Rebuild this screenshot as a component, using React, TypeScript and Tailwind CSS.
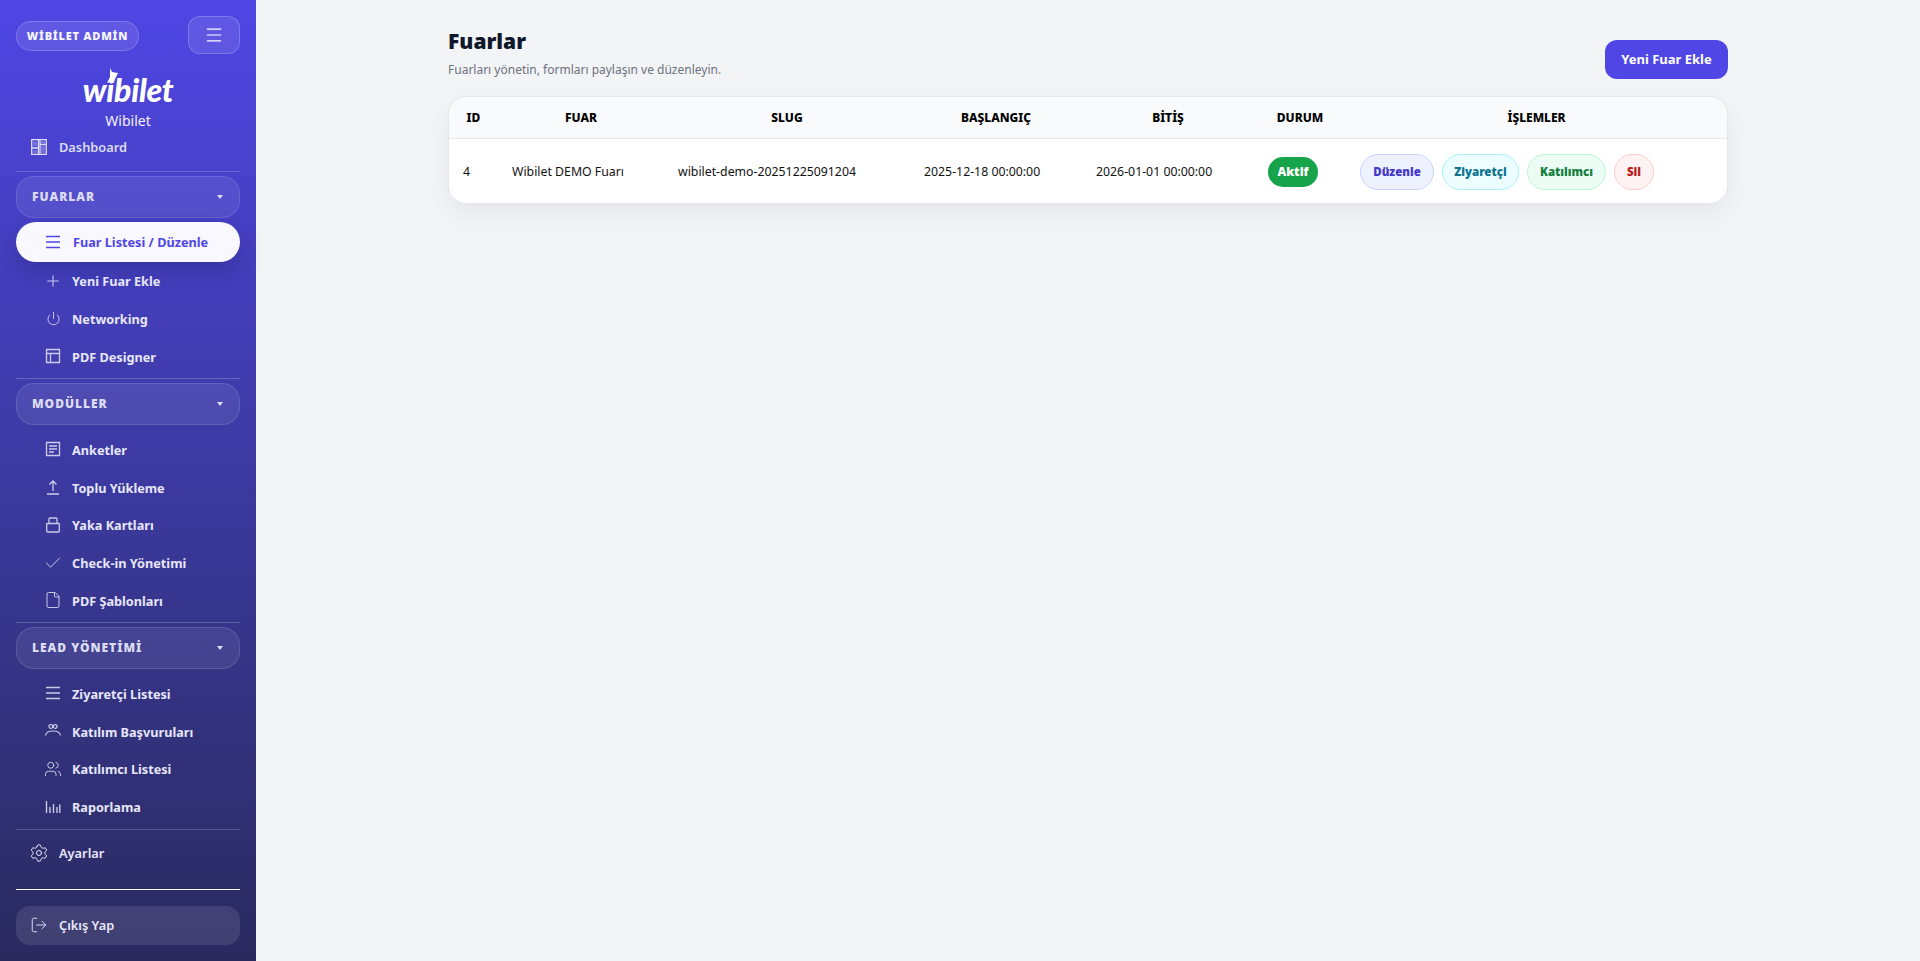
import { LogOut, Menu, Plus, Power, Settings, Check, File, Users } from "lucide-react";
import type { ReactNode } from "react";

const ic = "w-[18px] h-[18px] shrink-0";

function Svg({ children, className = ic }: { children: ReactNode; className?: string }) {
  return (
    <svg viewBox="0 0 18 18" fill="none" stroke="currentColor" strokeWidth="1.2" className={className}>
      {children}
    </svg>
  );
}

const LinesIcon = () => (
  <Svg><path d="M2 3.500h14M2 9h14M2 14.500h14" strokeWidth="1.400" /></Svg>
);
const TableIcon = () => (
  <Svg><path d="M2.500 2.500h13v13h-13zM2.500 6.500h13M6.500 6.500v9" strokeWidth="1.300" /></Svg>
);
const SurveyIcon = () => (
  <Svg><path d="M2.500 2.500h13v13h-13zM5 6h8M5 9h8M5 12h5" strokeWidth="1.300" /></Svg>
);
const UploadIcon = () => (
  <Svg><path d="M3 16h12M9 13V3M5.500 6.500 9 3l3.500 3.500" strokeWidth="1.300" /></Svg>
);
const BadgeIcon = () => (
  <Svg><path d="M3.500 7.500h11a.8.8 0 0 1 .8.8v6.900a.8.8 0 0 1-.8.8h-11a.8.8 0 0 1-.8-.8V8.300a.8.8 0 0 1 .8-.8ZM5 7.500V3a1 1 0 0 1 1-1h6a1 1 0 0 1 1 1v4.500" strokeWidth="1.300" /></Svg>
);
const PeopleIcon = () => (
  <Svg>
    <circle cx="6.800" cy="4.500" r="1.900" />
    <circle cx="11.200" cy="4.500" r="1.900" />
    <path d="M1.500 13.500c.5-3 2.500-4.500 7.500-4.500s7 1.500 7.500 4.500" />
  </Svg>
);
const ChartIcon = () => (
  <Svg><path d="M2.500 3v12M6 9v6M9.500 6v9M13 9v6M15.800 6.500v8.500" strokeWidth="1.400" /></Svg>
);
const DashIcon = () => (
  <svg viewBox="0 0 16 16" fill="none" stroke="currentColor" strokeWidth="1.300" className="w-4 h-4 shrink-0">
    <path d="M.7.7h14.600v14.600H.7z" />
    <path d="M7.400 1v8H1M9 1v4.500h6M7.400 9v6M9 5.500V15" />
    <path d="M2 2.500h4v5H2zM10 2h4v2.500h-4zM10 7h4v7h-4zM2 11h4v3H2z" fill="currentColor" fillOpacity="0.300" stroke="none" />
  </svg>
);

const fuarlar = [
  { label: "Fuar Listesi / Düzenle", icon: <LinesIcon />, active: true },
  { label: "Yeni Fuar Ekle", icon: <Plus className={ic} strokeWidth={1.4} /> },
  { label: "Networking", icon: <Power className="w-[15px] h-[15px] shrink-0" strokeWidth={1.5} /> },
  { label: "PDF Designer", icon: <TableIcon /> },
];
const moduller = [
  { label: "Anketler", icon: <SurveyIcon /> },
  { label: "Toplu Yükleme", icon: <UploadIcon /> },
  { label: "Yaka Kartları", icon: <BadgeIcon /> },
  { label: "Check-in Yönetimi", icon: <Check className="w-5 h-5 shrink-0" strokeWidth={1.2} /> },
  { label: "PDF Şablonları", icon: <File className={ic} strokeWidth={1.3} /> },
];
const lead = [
  { label: "Ziyaretçi Listesi", icon: <LinesIcon /> },
  { label: "Katılım Başvuruları", icon: <PeopleIcon /> },
  { label: "Katılımcı Listesi", icon: <Users className={ic} strokeWidth={1.3} /> },
  { label: "Raporlama", icon: <ChartIcon /> },
];

function SubItem({ label, icon, active }: { label: string; icon: ReactNode; active?: boolean }) {
  if (active) {
    return (
      <div className="h-10 flex items-center pl-[30px] gap-[13px] rounded-[20px] bg-[#f8f8fe] text-[#4f46e5] text-[12.700px] font-bold shadow-[0_10px_22px_rgba(20,20,80,0.25)]">
        <span className="w-[14px] flex justify-center">{icon}</span>
        <span className="pt-[2px]">{label}</span>
      </div>
    );
  }
  return (
    <div className="h-[37.800px] flex items-center pl-[30px] gap-[12px] text-[12.700px] font-bold text-[#e6e6f8]">
      <span className="w-[14px] flex justify-center opacity-85">{icon}</span>
      <span className="pt-[2px]">{label}</span>
    </div>
  );
}

function Section({ title }: { title: string }) {
  return (
    <div className="mx-4 h-[42px] mt-[4px] flex items-center justify-between pl-[15px] pr-[16px] rounded-[18px] border border-white/12 bg-white/8 text-[12px] font-black tracking-[1px] text-[#dcdcf4]">
      <span>{title}</span>
      <span className="w-0 h-0 border-x-[3px] border-x-transparent border-t-[4px] border-t-[#dcdcf4]" />
    </div>
  );
}

const Divider = () => <div className="mx-4 h-px bg-white/20" />;

function Sidebar() {
  return (
    <aside className="w-[256px] shrink-0 h-[961px] bg-gradient-to-b from-[#4f46e5] to-[#2a2a5f] text-white flex flex-col">
      <div className="flex justify-between items-center px-4 pt-4 h-[54px]">
        <div className="h-[30px] mt-[2px] w-[123px] flex items-center justify-center rounded-full border border-white/20 bg-white/10 text-[11px] font-black tracking-[0.8px] text-[#f4f4ff]">
          WİBİLET ADMİN
        </div>
        <div className="w-[52px] h-[38px] flex items-center justify-center rounded-xl border border-white/20 bg-white/10">
          <Menu className="w-5 h-5" strokeWidth={1.4} />
        </div>
      </div>
      <div className="relative h-[38px] mt-[14px] flex items-end justify-center">
        <svg viewBox="0 0 12 16" className="absolute left-[107px] top-0 w-[12px] h-[16px]" fill="#fff">
          <path d="M3 0 5 4 11 5 7 13 0 15 3 9Z" />
        </svg>
        <span className="font-['Lato'] italic font-black text-[32px] leading-[32px] tracking-[-0.3px] text-white">wibilet</span>
      </div>
      <div className="text-center text-[14px] leading-5 mt-[5px] text-[#f2f2ff]">Wibilet</div>
      <div className="h-[32px] flex items-center gap-[12px] pl-[31px] text-[12.800px] font-semibold text-[#dcdcf4]">
        <DashIcon />
        <span className="pt-[2px]">Dashboard</span>
      </div>
      <div className="mt-[8px]"><Divider /></div>
      <Section title="FUARLAR" />
      <div className="mx-4 mt-1">
        <SubItem {...fuarlar[0]} />
      </div>
      <div className="mx-4">
        {fuarlar.slice(1).map(i => <SubItem key={i.label} {...i} />)}
      </div>
      <div className="mt-[3px]"><Divider /></div>
      <Section title="MODÜLLER" />
      <div className="mx-4 mt-[5px]">
        {moduller.map(i => <SubItem key={i.label} {...i} />)}
      </div>
      <div className="mt-[3px]"><Divider /></div>
      <Section title="LEAD YÖNETİMİ" />
      <div className="mx-4 mt-[5px]">
        {lead.map(i => <SubItem key={i.label} {...i} />)}
      </div>
      <div className="mt-[3px]"><Divider /></div>
      <div className="h-[46px] flex items-center gap-[10px] pl-[29px] text-[12.800px] font-semibold text-[#e8e8fa]">
        <Settings className="w-5 h-5" strokeWidth={1.2} />
        <span className="pt-[2px]">Ayarlar</span>
      </div>
      <div className="mx-4 mt-[13px] h-px bg-white" />
      <div className="mx-4 mt-4 h-[39px] flex items-center gap-[11px] pl-[14px] rounded-[14px] bg-white/10 text-[12.800px] font-semibold text-[#e8e8fa]">
        <LogOut className="w-[18px] h-[18px]" strokeWidth={1.2} />
        <span className="pt-[2px]">Çıkış Yap</span>
      </div>
    </aside>
  );
}

const actions = [
  { label: "Düzenle", cls: "w-[74px] bg-[#eef2ff] border-[#c7d2fe] text-[#4338ca]" },
  { label: "Ziyaretçi", cls: "w-[77px] bg-[#ecfeff] border-[#a5f3fc] text-[#0e7490]" },
  { label: "Katılımcı", cls: "w-[79px] bg-[#ecfdf5] border-[#bbf7d0] text-[#15803d]" },
  { label: "Sil", cls: "w-[40px] bg-[#fef2f2] border-[#fecaca] text-[#b91c1c]" },
];

const th = "font-extrabold text-[12px] text-black text-center align-middle p-0 pt-px";
const td = "text-[12.300px] text-[#111] pl-[14px] pt-[2px] align-middle";

export default function App() {
  return (
    <div className="flex min-h-[961px] bg-[#f3f4f6] font-['Noto_Sans','Open_Sans',sans-serif]">
      <Sidebar />
      <main className="flex-1 min-w-0">
        <div className="w-[1280px] mx-auto pt-[26px]">
          <div className="flex justify-between items-start">
            <div>
              <h1 className="text-[21px] leading-[30px] font-black text-[#0f172a]">Fuarlar</h1>
              <p className="text-[12px] leading-[20px] mt-[4px] text-[#6b7280]">Fuarları yönetin, formları paylaşın ve düzenleyin.</p>
            </div>
            <button className="mt-[14px] w-[123px] h-[39px] rounded-xl bg-[#4f46e5] text-white text-[13px] font-bold">Yeni Fuar Ekle</button>
          </div>
          <div className="mt-[16px] rounded-[18px] border border-[#e5e7eb] bg-white overflow-hidden shadow-[0_10px_25px_rgba(15,23,42,0.06)]">
            <table className="w-full table-fixed border-collapse">
              <thead>
                <tr className="h-[41px] bg-[#f9fafb] border-b border-[#e2e8f0]">
                  <th className={`${th} w-[49px]`}>ID</th>
                  <th className={`${th} w-[166px]`}>FUAR</th>
                  <th className={`${th} w-[246px]`}>SLUG</th>
                  <th className={`${th} w-[172px]`}>BAŞLANGIÇ</th>
                  <th className={`${th} w-[172px]`}>BİTİŞ</th>
                  <th className={`${th} w-[92px]`}>DURUM</th>
                  <th className={th}>İŞLEMLER</th>
                </tr>
              </thead>
              <tbody>
                <tr className="h-[65px]">
                  <td className={td}>4</td>
                  <td className={td}>Wibilet DEMO Fuarı</td>
                  <td className={td}>wibilet-demo-20251225091204</td>
                  <td className={td}>2025-12-18 00:00:00</td>
                  <td className={td}>2026-01-01 00:00:00</td>
                  <td className={td}>
                    <span className="flex items-center justify-center w-[50px] h-[30px] rounded-full bg-[#16a34a] text-white text-[12px] font-black">Aktif</span>
                  </td>
                  <td className={td}>
                    <div className="flex gap-2">
                      {actions.map(a => (
                        <span key={a.label} className={`h-9 flex items-center justify-center rounded-full border ${a.cls} text-[11.500px] font-black`}>{a.label}</span>
                      ))}
                    </div>
                  </td>
                </tr>
              </tbody>
            </table>
          </div>
        </div>
      </main>
    </div>
  );
}
